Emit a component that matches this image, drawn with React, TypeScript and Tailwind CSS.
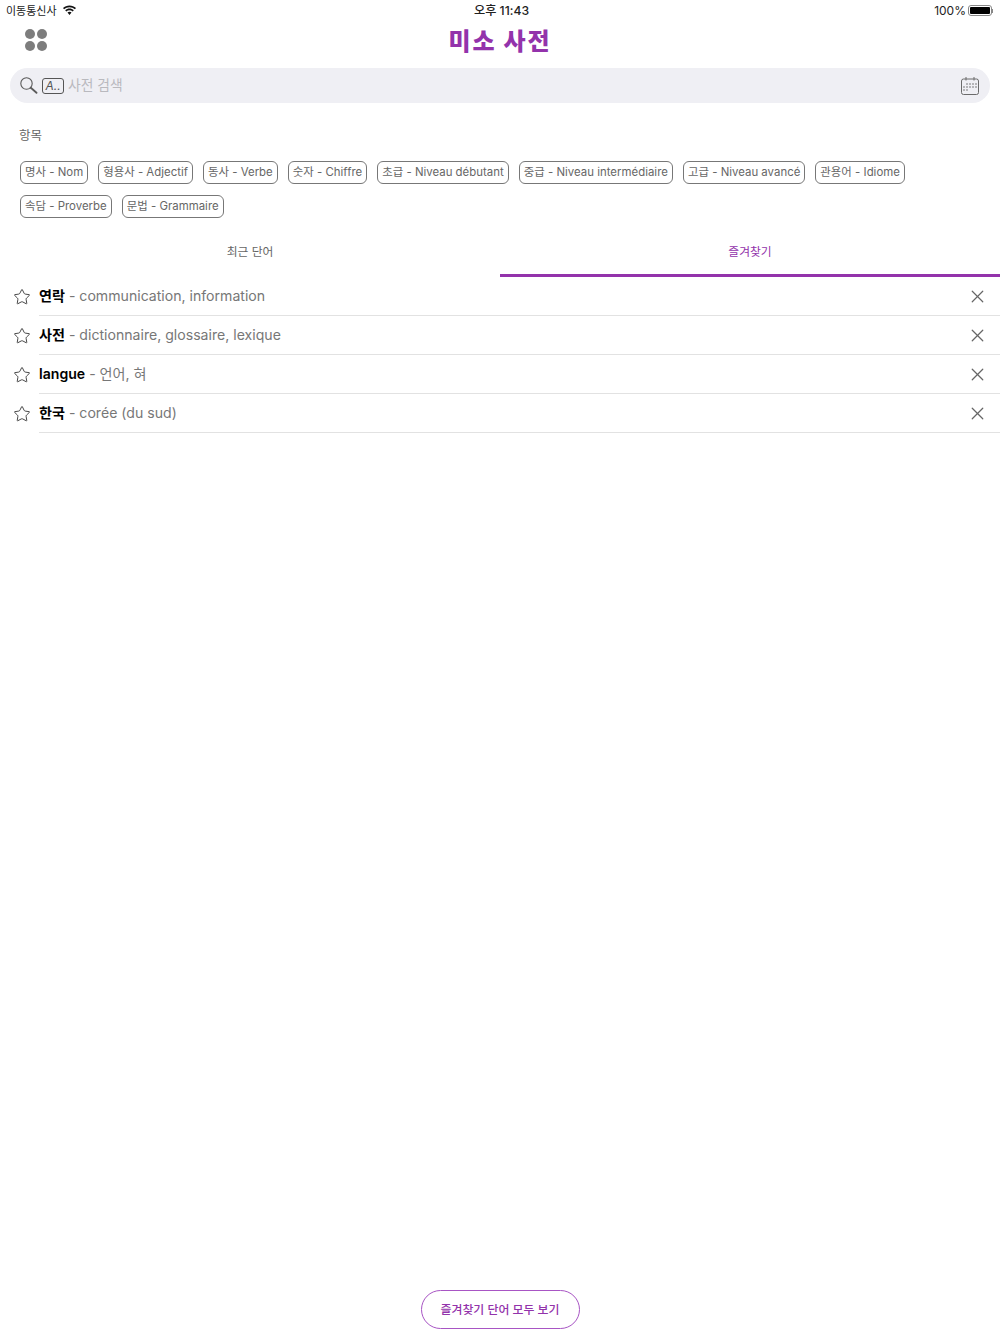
import React from "react";
import { X, Star } from "lucide-react";

const FONT = "font-['Inter','Noto_Sans_CJK_KR',sans-serif]";

const chipRows = [
  [
    "명사 - Nom",
    "형용사 - Adjectif",
    "동사 - Verbe",
    "숫자 - Chiffre",
    "초급 - Niveau débutant",
    "중급 - Niveau intermédiaire",
    "고급 - Niveau avancé",
    "관용어 - Idiome",
  ],
  ["속담 - Proverbe", "문법 - Grammaire"],
];

const words = [
  { word: "연락", meaning: "communication, information" },
  { word: "사전", meaning: "dictionnaire, glossaire, lexique" },
  { word: "langue", meaning: "언어, 혀" },
  { word: "한국", meaning: "corée (du sud)" },
];

const WifiIcon = () => (
  <svg width="15" height="11" viewBox="0 0 15 11" fill="#111">
    <path d="M7.5 2.2c2.1 0 4 .8 5.4 2.1l1.1-1.2C12.3 1.4 10 .4 7.5.4S2.700 1.400 1 3.100l1.100 1.200C3.500 3 5.400 2.200 7.500 2.200z" />
    <path d="M7.500 5.300c1.200 0 2.300.4 3.200 1.200l1.100-1.200C10.600 4.200 9.100 3.600 7.500 3.600s-3.100.6-4.300 1.700l1.100 1.200c.9-.8 2-1.200 3.200-1.200z" />
    <path d="M7.500 6.800c-.8 0-1.500.3-2 .8l2 2.400 2-2.400c-.5-.5-1.200-.8-2-.8z" />
  </svg>
);

const SearchIcon = () => (
  <svg width="18" height="17" viewBox="0 0 18 17" fill="none" stroke="#5a5a5a">
    <circle cx="6.500" cy="6.500" r="5.700" strokeWidth="1.100" />
    <path d="M10.800 10.800l5.700 5" strokeWidth="1.800" strokeLinecap="round" />
  </svg>
);

const CalendarIcon = () => (
  <svg width="20" height="20" viewBox="0 0 20 20" fill="none" stroke="#6b6b6b" strokeWidth="1">
    <rect x="1.500" y="3" width="17" height="15.500" rx="2" />
    <path d="M6 1v3.500M14 1v3.500" />
    <g fill="#6b6b6b" stroke="none">
      <circle cx="7" cy="8" r=".8" /><circle cx="10" cy="8" r=".8" /><circle cx="13" cy="8" r=".8" /><circle cx="16" cy="8" r=".8" />
      <circle cx="4" cy="11" r=".8" /><circle cx="7" cy="11" r=".8" /><circle cx="10" cy="11" r=".8" /><circle cx="13" cy="11" r=".8" /><circle cx="16" cy="11" r=".8" />
      <circle cx="4" cy="14" r=".8" /><circle cx="7" cy="14" r=".8" />
    </g>
  </svg>
);

export default function App() {
  return (
    <div className={`${FONT} relative flex h-[1334px] w-[1000px] flex-col bg-white`}>
      {/* Status bar */}
      <div className="flex h-5 items-center justify-between pl-[6px] pr-[7px] pt-[2px] text-[12px] text-[#222]">
        <div className="flex w-[200px] items-center gap-[5px]">
          <span className="text-[11px]">이동통신사</span>
          <div className="-mt-[2px]">
            <WifiIcon />
          </div>
        </div>
        <span className="ml-[4px] text-[12.200px] font-medium">오후 11:43</span>
        <div className="flex w-[200px] items-center justify-end gap-[2px]">
          <span>100%</span>
          <div className="-mt-[1px] flex items-center">
            <div className="h-[11px] w-[24px] rounded-[3px] border border-[#888] p-[1px]">
              <div className="h-full w-full rounded-[1px] bg-black" />
            </div>
            <div className="h-[4px] w-[1px] bg-[#888]" />
          </div>
        </div>
      </div>

      {/* Header */}
      <div className="relative flex h-[40px] items-center justify-center">
        <div className="absolute left-[25px] top-[9px] grid grid-cols-2 gap-[2px]">
          <div className="h-[10px] w-[10px] rounded-full bg-[#7d7d7d]" />
          <div className="h-[10px] w-[10px] rounded-full bg-[#7d7d7d]" />
          <div className="h-[10px] w-[10px] rounded-full bg-[#7d7d7d]" />
          <div className="h-[10px] w-[10px] rounded-full bg-[#7d7d7d]" />
        </div>
        <span className="mt-[3px] text-[24px] font-black tracking-[2px] text-[#9333ab]">미소 사전</span>
      </div>

      {/* Search */}
      <div className="mx-[10px] mt-2 flex h-[35px] items-center rounded-[18px] bg-[#efeff4] pl-[10px] pr-[10px]">
        <SearchIcon />
        <div className="ml-[4px] flex h-[16px] w-[22px] items-center justify-center rounded-[3px] border border-[#555] text-[12px] italic leading-none text-[#555]">
          A..
        </div>
        <span className="ml-[4px] flex-1 text-[13.800px] text-[#b9b9be]">사전 검색</span>
        <CalendarIcon />
      </div>

      {/* Categories */}
      <div className="mt-[25px] px-[19px] text-[12.500px] leading-[16px] text-[#666]">항목</div>
      <div className="mt-[17px] flex flex-col gap-[11px] px-[20px]">
        {chipRows.map((row, i) => (
          <div key={i} className="flex gap-[10px]">
            {row.map((chip) => (
              <div
                key={chip}
                className="flex h-[23px] items-center rounded-[6px] border border-[#777] px-[4px] text-[11.400px] tracking-[0.02px] text-[#666]"
              >
                {chip}
              </div>
            ))}
          </div>
        ))}
      </div>

      {/* Tabs */}
      <div className="mt-[23px] flex h-[36px] text-[11.800px]">
        <div className="flex flex-1 items-start justify-center pt-[3px] text-[#666]">최근 단어</div>
        <div className="flex flex-1 items-start justify-center border-b-[3px] border-[#9333ab] pt-[3px] text-[#9333ab]">
          즐겨찾기
        </div>
      </div>

      {/* Word list */}
      <div>
        {words.map((item) => (
          <div key={item.word} className="flex h-[39px] items-stretch">
            <div className="flex w-[39px] items-center justify-center pl-[5px]">
              <Star size={18} strokeWidth={1.200} className="text-[#333]" />
            </div>
            <div className="flex flex-1 items-center justify-between border-b border-[#e2e2e2] pr-[12px] text-[14.100px]">
              <div>
                <span className="font-semibold text-black">{item.word}</span>
                <span className="text-[#777]"> - {item.meaning}</span>
              </div>
              <X size={21} strokeWidth={1.400} className="text-[#666]" />
            </div>
          </div>
        ))}
      </div>

      {/* Bottom button */}
      <div className="mt-auto mb-[5px] flex justify-center">
        <div className="flex h-[39px] w-[159px] items-center justify-center rounded-[20px] border border-[#a855c4] text-[11.900px] font-medium text-[#9333ab]">
          즐겨찾기 단어 모두 보기
        </div>
      </div>
    </div>
  );
}
